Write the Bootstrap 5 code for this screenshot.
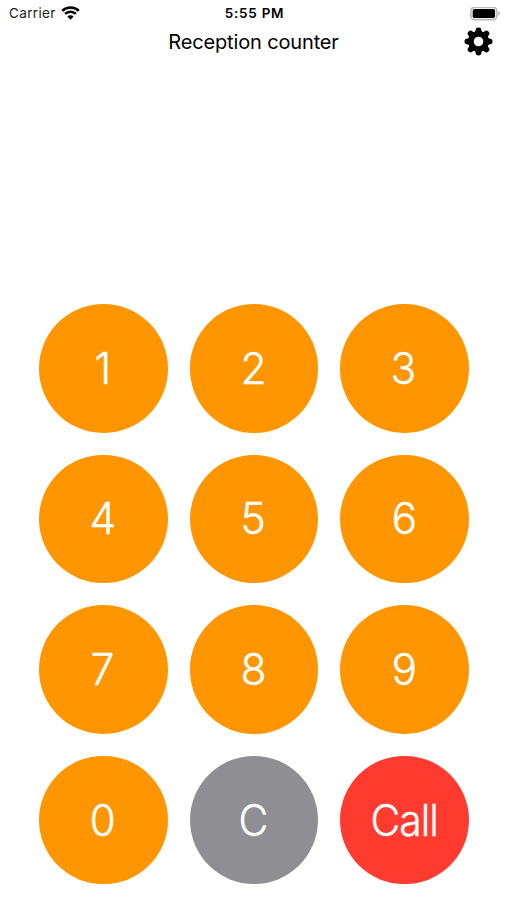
<!DOCTYPE html>
<html lang="en"><head><meta charset="utf-8"><meta name="viewport" content="width=device-width, initial-scale=1"><title>Reception counter</title>
<link href="https://cdn.jsdelivr.net/npm/bootstrap@5.3.0/dist/css/bootstrap.min.css" rel="stylesheet">
<style>
body{font-family:Inter,"Liberation Sans",sans-serif;color:#000;background:#fff;height:900px;overflow:hidden}
.status{height:27px;padding:0 6px 0 9px;font-size:13.5px;line-height:27px}
.status .wifi{margin-bottom:1px}
.carrier{letter-spacing:.35px;color:#222}
.wifi{margin-left:5px}
.clock{font-weight:600;font-size:13.5px;letter-spacing:.75px;margin-left:-1px}
.side{flex:1 1 0}
.topbar{height:30px;padding:0 14px}
.topbar svg{margin-bottom:2px}
.title{font-size:20px;line-height:30px;letter-spacing:-.15px;font-weight:400}
.keypad{display:grid;grid-template-columns:repeat(3,128.6px);gap:22px;padding:247px 0 0 39px}
.key{width:128.6px;height:128.6px;background:#ff9500;color:#fff;font-size:43px;line-height:1;padding:0;border:0;font-weight:300;-webkit-text-stroke:.4px #fff}
.key span{display:inline-block;transform:translate(-.7px,.3px) scaleX(.99)}
.key-clear{background:#8e8e93}.key-call{background:#ff3b30;letter-spacing:-1px}
.key-clear span,.key-call span{transform:translate(-.3px,.3px) scaleX(.95)}
</style></head><body>
<header>
<div class="status d-flex align-items-center">
<div class="side d-flex align-items-center"><span class="carrier">Carrier</span>
<svg class="wifi" width="19" height="14" viewBox="0 0 19 14"><path d="M1.2 4.8a11.8 11.8 0 0 1 16.6 0M4.1 7.9a7.7 7.7 0 0 1 10.8 0" fill="none" stroke="#000" stroke-width="2.5"/><path d="M6.4 10.5a4.4 4.4 0 0 1 6.2 0L9.5 13.7z"/></svg></div>
<div class="clock">5:55 PM</div>
<div class="side d-flex justify-content-end"><svg width="31" height="14" viewBox="0 0 31 14"><rect x=".9" y=".4" width="26" height="12.2" rx="3.5" fill="#fff" stroke="#bbb" stroke-width="1.6"/><rect x="2.7" y="2" width="22.4" height="9" rx="1.8"/><path d="M28.4 4.1q3.6 2.4 0 4.8z" fill="#bbb"/></svg></div>
</div>
<div class="topbar d-flex align-items-center"><div class="side"></div><h1 class="title m-0">Reception counter</h1><div class="side d-flex justify-content-end">
<svg width="29" height="29" viewBox="-14.5 -14.5 29 29" role="img" aria-label="Settings">
<circle r="7.6" fill="none" stroke="#000" stroke-width="5.6"/>
<defs><path id="tooth" d="M-4-9.2Q-2.9-10.2-2.8-11.6C-2.7-13.3-2-14 0-14S2.7-13.3 2.8-11.6Q2.9-10.2 4-9.2z"/></defs>
<use href="#tooth"/><use href="#tooth" transform="rotate(45)"/><use href="#tooth" transform="rotate(90)"/><use href="#tooth" transform="rotate(135)"/><use href="#tooth" transform="rotate(180)"/><use href="#tooth" transform="rotate(225)"/><use href="#tooth" transform="rotate(270)"/><use href="#tooth" transform="rotate(315)"/>
</svg></div></div>
</header>
<main class="keypad">
<button class="btn key rounded-circle"><span>1</span></button><button class="btn key rounded-circle"><span>2</span></button><button class="btn key rounded-circle"><span>3</span></button>
<button class="btn key rounded-circle"><span>4</span></button><button class="btn key rounded-circle"><span>5</span></button><button class="btn key rounded-circle"><span>6</span></button>
<button class="btn key rounded-circle"><span>7</span></button><button class="btn key rounded-circle"><span>8</span></button><button class="btn key rounded-circle"><span>9</span></button>
<button class="btn key rounded-circle"><span>0</span></button><button class="btn key key-clear rounded-circle"><span>C</span></button><button class="btn key key-call rounded-circle"><span>Call</span></button>
</main>
<script src="https://cdn.jsdelivr.net/npm/bootstrap@5.3.0/dist/js/bootstrap.bundle.min.js"></script>
</body></html>
